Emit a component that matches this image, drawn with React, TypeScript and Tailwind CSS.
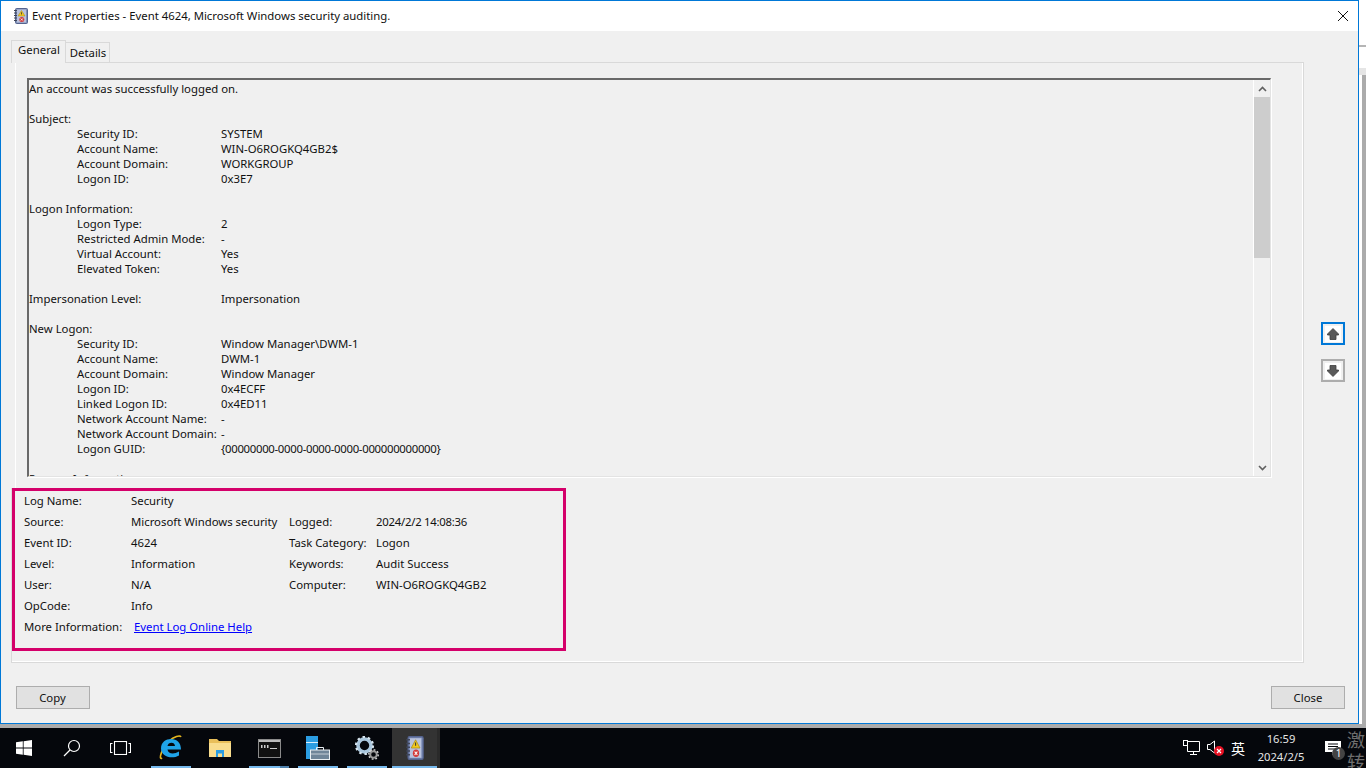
import React from "react";

const font = { fontFamily: '"Noto Sans", "Liberation Sans", sans-serif' };

type L = [string?, string?, string?];
const lines: L[] = [
  ["An account was successfully logged on."], [],
  ["Subject:"],
  ["", "Security ID:", "SYSTEM"],
  ["", "Account Name:", "WIN-O6ROGKQ4GB2$"],
  ["", "Account Domain:", "WORKGROUP"],
  ["", "Logon ID:", "0x3E7"],
  [],
  ["Logon Information:"],
  ["", "Logon Type:", "2"],
  ["", "Restricted Admin Mode:", "-"],
  ["", "Virtual Account:", "Yes"],
  ["", "Elevated Token:", "Yes"],
  [],
  ["Impersonation Level:", "", "Impersonation"],
  [],
  ["New Logon:"],
  ["", "Security ID:", "Window Manager\\DWM-1"],
  ["", "Account Name:", "DWM-1"],
  ["", "Account Domain:", "Window Manager"],
  ["", "Logon ID:", "0x4ECFF"],
  ["", "Linked Logon ID:", "0x4ED11"],
  ["", "Network Account Name:", "-"],
  ["", "Network Account Domain:", "-"],
  ["", "Logon GUID:", "{00000000-0000-0000-0000-000000000000}"],
  [],
  ["Process Information:"],
];

function EventLine({ l }: { l: L }) {
  const [a, b, c] = l;
  if (a === undefined) return <div className="h-[15px]" />;
  if (b === undefined) return <div className="h-[15px] leading-[15px] whitespace-nowrap">{a}</div>;
  return (
    <div className="h-[15px] leading-[15px] whitespace-nowrap flex">
      {b ? <div className="w-[48px] shrink-0" /> : null}
      <div className={b ? "w-[144px] shrink-0" : "w-[192px] shrink-0"}>{b || a}</div>
      <div className={c && c.startsWith("{") ? "tracking-[-0.3px]" : ""}>{c}</div>
    </div>
  );
}

function Row({ k, v, k2, v2, tight }: { k: string; v: string; k2?: string; v2?: string; tight?: boolean }) {
  return (
    <div className="h-[21px] leading-[19px] flex whitespace-nowrap">
      <div className="w-[107px] shrink-0">{k}</div>
      <div className="w-[158px] shrink-0">{v}</div>
      <div className="w-[87px] shrink-0">{k2}</div>
      <div className={tight ? "tracking-[-0.25px]" : ""}>{v2}</div>
    </div>
  );
}

function ArrowBtn({ up }: { up?: boolean }) {
  return (
    <div className={"w-[24px] h-[23px] flex items-center justify-center bg-[#f0f0f0] border-2 " + (up ? "border-[#0078d7]" : "border-[#adadad]")}>
      <div className="w-[16px] h-[16px] bg-white flex items-center justify-center">
        <svg width="14" height="14" viewBox="0 0 14 14">
          <path
            d={up ? "M7 1.500 L12.500 7 V8 H10 V12.500 H4 V8 H1.500 V7 Z" : "M7 12.500 L12.500 7 V6 H10 V1.500 H4 V6 H1.500 V7 Z"}
            fill="#5a5a5a"
            stroke="#3c3c3c"
            strokeWidth="0.8"
          />
        </svg>
      </div>
    </div>
  );
}

function LogIcon({ w = 16, h = 16 }: { w?: number; h?: number }) {
  return (
    <svg width={w} height={h} viewBox="0 0 16 16" preserveAspectRatio="none">
      <rect x="2.500" y="0.500" width="12" height="15" rx="1" fill="#7f8fb8" stroke="#55648f" />
      <rect x="4" y="1.500" width="9" height="13" fill="#b9c2dc" />
      <path d="M1 2.500h3M1 5h3M1 7.500h3M1 10h3M1 12.500h3" stroke="#3f4658" strokeWidth="1" />
      <path d="M8.500 2.500 L12 8 H5 Z" fill="#f2c81e" stroke="#a88a10" strokeWidth="0.5" />
      <rect x="8.100" y="4.300" width="0.800" height="2.200" fill="#333" />
      <circle cx="8.800" cy="11.500" r="2.500" fill="#d23a3a" />
      <path d="M7.700 10.400l2.200 2.200M9.900 10.400l-2.200 2.200" stroke="#fff" strokeWidth="0.8" />
    </svg>
  );
}

function TaskItem({ w = 40, ml, bar, active, children }: { w?: number; ml: number; bar?: boolean; active?: boolean; children: React.ReactNode }) {
  return (
    <div
      className={"relative h-full flex items-center justify-center shrink-0 " + (active ? "bg-[#333333]" : "")}
      style={{ width: w, marginLeft: ml }}
    >
      {children}
      {bar ? <div className="absolute left-0 right-0 bottom-0 h-[2px] bg-[#76b9ed]" /> : null}
    </div>
  );
}

export default function App() {
  return (
    <div className="w-[1366px] h-[768px] overflow-hidden flex flex-col bg-[#ababab] text-[11.35px] text-[#111]" style={font}>
      <div className="h-[728px] flex shrink-0">
        {/* dialog */}
        <div className="w-[1359px] h-[724px] shrink-0 border border-[#0078d7] bg-[#f0f0f0] flex flex-col">
          <div className="h-[30px] bg-white flex items-center pl-[12px] shrink-0">
            <LogIcon />
            <div className="ml-[3px] whitespace-nowrap">Event Properties - Event 4624, Microsoft Windows security auditing.</div>
            <svg className="ml-auto mr-[9px]" width="12" height="12" viewBox="0 0 12 12">
              <path d="M1 1 L11 11 M11 1 L1 11" stroke="#111" strokeWidth="1" />
            </svg>
          </div>

          <div className="flex-1 flex flex-col relative">
            <div className="pl-[10px] pt-[9px] flex items-end h-[31px] shrink-0">
              <div className="h-[23px] w-[55px] bg-[#f0f0f0] border border-b-0 border-[#d9d9d9] flex items-center justify-center relative top-[1px] z-10 pb-[4px] pl-[1px]">General</div>
              <div className="h-[20px] w-[44px] border border-b-0 border-l-0 border-[#d9d9d9] flex items-center justify-center pl-[1px]">Details</div>
            </div>

            <div className="flex">
              {/* tab panel */}
              <div className="ml-[10px] w-[1293px] h-[601px] shrink-0 flex flex-col border-r border-b border-[#d9d9d9] shadow-[inset_-1px_-1px_0_#ffffff]">
                <div className="ml-[4px] h-[426px] shrink-0 border-t border-l border-t-[#d9d9d9] border-l-white pt-[15px] pl-[11px]">
                  <div className="w-[1244px] h-[399px] flex border-t-2 border-l-2 border-[#696969] border-r border-b border-r-[#e3e3e3] border-b-[#e3e3e3] shadow-[1px_1px_0_#ffffff] overflow-hidden">
                    <div className="flex-1 pt-[1px] overflow-hidden">
                      {lines.map((l, i) => (
                        <EventLine key={i} l={l} />
                      ))}
                    </div>
                    <div className="w-[17px] shrink-0 bg-[#f0f0f0] flex flex-col items-center border-l border-white">
                      <div className="h-[17px] flex items-center justify-center">
                        <svg width="9" height="6" viewBox="0 0 9 6"><path d="M1 5 L4.500 1.500 L8 5" fill="none" stroke="#606060" strokeWidth="1.600" /></svg>
                      </div>
                      <div className="w-full h-[161px] bg-[#cdcdcd]" />
                      <div className="mt-auto h-[17px] flex items-center justify-center">
                        <svg width="9" height="6" viewBox="0 0 9 6"><path d="M1 1 L4.500 4.500 L8 1" fill="none" stroke="#606060" strokeWidth="1.600" /></svg>
                      </div>
                    </div>
                  </div>
                </div>

                {/* lower part with highlighted details */}
                <div className="flex-1 border-l border-l-[#d9d9d9]">
                  <div className="w-[554px] h-[163px] border-[3px] border-[#d4006a] pl-[9px]">
                    <Row k="Log Name:" v="Security" />
                    <Row k="Source:" v="Microsoft Windows security" k2="Logged:" v2="2024/2/2 14:08:36" tight />
                    <Row k="Event ID:" v="4624" k2="Task Category:" v2="Logon" />
                    <Row k="Level:" v="Information" k2="Keywords:" v2="Audit Success" />
                    <Row k="User:" v="N/A" k2="Computer:" v2="WIN-O6ROGKQ4GB2" />
                    <Row k="OpCode:" v="Info" />
                    <div className="h-[21px] leading-[19px] flex whitespace-nowrap">
                      <div className="w-[110px] shrink-0">More Information:</div>
                      <a className="text-[#0000ff] underline">Event Log Online Help</a>
                    </div>
                  </div>
                </div>
              </div>

              <div className="ml-[17px] mt-[260px] flex flex-col gap-[14px]">
                <ArrowBtn up />
                <ArrowBtn />
              </div>
            </div>

            <div className="flex justify-between pl-[15px] pr-[13px] mt-[23px]">
              <div className="w-[74px] h-[23px] bg-[#e1e1e1] border border-[#adadad] flex items-center justify-center pr-[1px]">Copy</div>
              <div className="w-[74px] h-[23px] bg-[#e1e1e1] border border-[#adadad] flex items-center justify-center">Close</div>
            </div>
          </div>
        </div>

        {/* window behind */}
        <div className="flex-1 flex flex-col">
          <div className="h-[45px] bg-white shrink-0" />
          <div className="h-[2px] bg-[#b5b5b5] shrink-0" />
          <div className="h-[21px] bg-white shrink-0" />
          <div className="h-[7px] bg-[#e5e5e5] shrink-0" />
          <div className="h-[649px] flex shrink-0">
            <div className="w-[3px] bg-white" />
            <div className="flex-1 bg-[#ababab]" />
          </div>
        </div>
      </div>

      {/* taskbar */}
      <div className="h-[40px] bg-[#05070c] flex items-center text-white relative shrink-0">
        <div className="w-[48px] h-full flex items-center justify-center shrink-0">
          <svg width="16" height="16" viewBox="0 0 16 16" fill="#fff">
            <path d="M0 2.300 L6.800 1.300 V7.600 H0 Z M7.600 1.200 L16 0 V7.600 H7.600 Z M0 8.400 H6.800 V14.700 L0 13.700 Z M7.600 8.400 H16 V16 L7.600 14.800 Z" />
          </svg>
        </div>
        <div className="w-[48px] h-full flex items-center justify-center shrink-0">
          <svg width="18" height="18" viewBox="0 0 18 18" fill="none" stroke="#fff" strokeWidth="1.200">
            <circle cx="11" cy="7" r="5.500" />
            <path d="M7 11 L1 17" />
          </svg>
        </div>
        <div className="w-[48px] h-full flex items-center justify-center shrink-0">
          <svg width="21" height="14" viewBox="0 0 21 14" fill="none" stroke="#fff" strokeWidth="1.100">
            <rect x="4.500" y="0.500" width="12" height="13" />
            <path d="M2.500 2.500H0.500V11.500H2.500M18.500 2.500H20.500V11.500H18.500" />
          </svg>
        </div>

        <TaskItem ml={7} bar>
          <svg width="24" height="26" viewBox="0 0 24 26">
            <path d="M3 23 C-1 26 3 12 10 6 C15 1.500 21 0 22 2" fill="none" stroke="#e5b61f" strokeWidth="1.600" />
            <path d="M2 13.500 C2 7 7 4 12 4 C18 4 22 8 22 14.500 H8.500 C9 19 15 19.500 20 16.500 V20.500 C13 24.500 2 22 2 13.500 Z M8.500 11 H16 C16 6.500 9 6.500 8.500 11 Z" fill="#1fa3e8" />
          </svg>
        </TaskItem>
        <TaskItem ml={9}>
          <svg width="22" height="20" viewBox="0 0 22 20">
            <path d="M0 1 H8 L10 3 H22 V19 H0 Z" fill="#e9bf5a" />
            <path d="M0 5 H22 V19 H0 Z" fill="#f9dd8e" />
            <path d="M7 19 V12 H15 V19 H13 V15.500 H9 V19 Z" fill="#2b9de2" />
          </svg>
        </TaskItem>
        <TaskItem ml={9} bar>
          <svg width="23" height="19" viewBox="0 0 23 19">
            <rect x="0.500" y="0.500" width="22" height="18" fill="#111" stroke="#8a8a8a" />
            <rect x="1" y="1" width="21" height="2" fill="#bbb" />
            <path d="M3 6h1.500v3H3zM6 6h1.500v3H6zM9 6h1.500v3H9zM12 9h7v1h-7z" fill="#ccc" />
          </svg>
          <div className="absolute right-0 bottom-0 w-[9px] h-[2px] bg-[#4f81ad] z-10" />
        </TaskItem>
        <TaskItem ml={9} bar>
          <svg width="24" height="24" viewBox="0 0 24 24">
            <rect x="0" y="0" width="12" height="23" fill="#2b9de2" />
            <path d="M0 6.500 H12" stroke="#d8eefb" strokeWidth="1" />
            <rect x="4.500" y="14" width="19" height="9.500" fill="#6f8599" stroke="#e9eef2" />
            <path d="M10.500 14 V11.500 H17.500 V14" fill="none" stroke="#e9eef2" />
            <path d="M5 18 H23" stroke="#e9eef2" strokeWidth="0.700" />
          </svg>
        </TaskItem>
        <TaskItem ml={9} bar>
          <svg width="24" height="24" viewBox="0 0 24 24">
            <circle cx="9.500" cy="9.500" r="6.500" fill="none" stroke="#a9c6dd" strokeWidth="3.600" />
            <circle cx="9.500" cy="9.500" r="8.500" fill="none" stroke="#d7e5ef" strokeWidth="2.200" strokeDasharray="2.500 2.900" />
            <circle cx="18.500" cy="18.500" r="3.300" fill="none" stroke="#9a9a9a" strokeWidth="2" />
            <circle cx="18.500" cy="18.500" r="4.800" fill="none" stroke="#d0d0d0" strokeWidth="1.400" strokeDasharray="1.800 1.900" />
          </svg>
        </TaskItem>
        <TaskItem w={45} ml={5} bar active>
          <LogIcon w={20} h={24} />
        </TaskItem>
        <div className="w-[3px] h-full bg-[#2a2a2a] shrink-0" />

        {/* tray */}
        <div className="ml-auto h-full flex items-center relative shrink-0">
          <svg className="mr-[7px]" width="17" height="16" viewBox="0 0 17 16" fill="none" stroke="#fff">
            <path d="M4.500 1.500 H16.500 V11.500 H4.500 V6" />
            <path d="M10.500 11.500 V14.500 M7 14.500 H14" />
            <rect x="0.500" y="0.500" width="4" height="5" />
          </svg>
          <div className="relative w-[18px] h-[16px] mr-[3px]">
            <svg width="10" height="14" viewBox="0 0 10 14" fill="none" stroke="#fff">
              <path d="M0.500 4.500 H3 L7.500 1 V13 L3 9.500 H0.500 Z" />
            </svg>
            <div className="absolute left-[7px] top-[6px] w-[10px] h-[10px] rounded-full bg-[#e81123] flex items-center justify-center">
              <svg width="6" height="6" viewBox="0 0 6 6"><path d="M1 1 L5 5 M5 1 L1 5" stroke="#fff" strokeWidth="1.200" /></svg>
            </div>
          </div>
          <div className="w-[20px] text-[14px] leading-none text-center mr-[3px]" style={{ fontFamily: '"Noto Sans CJK SC", sans-serif' }}>英</div>
          <div className="w-[60px] text-center text-[11.2px] leading-[18px] mr-[14px] text-[#e6e6e6]">
            <div>16:59</div>
            <div>2024/2/5</div>
          </div>
          <div className="relative w-[16px] h-[15px] mr-[5px]">
            <svg width="16" height="15" viewBox="0 0 16 15">
              <path d="M0 0 H16 V11 H10 L7 14 V11 H0 Z" fill="#fff" />
              <path d="M3 3h10M3 5.500h10M3 8h10" stroke="#05070c" strokeWidth="1" />
            </svg>
            <div className="absolute left-[7px] top-[6px] w-[13px] h-[13px] rounded-full bg-[#444] text-[10px] leading-[13px] text-center">1</div>
          </div>
          <div className="w-[20px] h-full overflow-hidden text-[18px] leading-[22px] text-[#6e6e6e] pl-[1px]" style={{ fontFamily: '"Noto Sans CJK SC", sans-serif' }}>
            激<br />转
          </div>
        </div>
      </div>
    </div>
  );
}
